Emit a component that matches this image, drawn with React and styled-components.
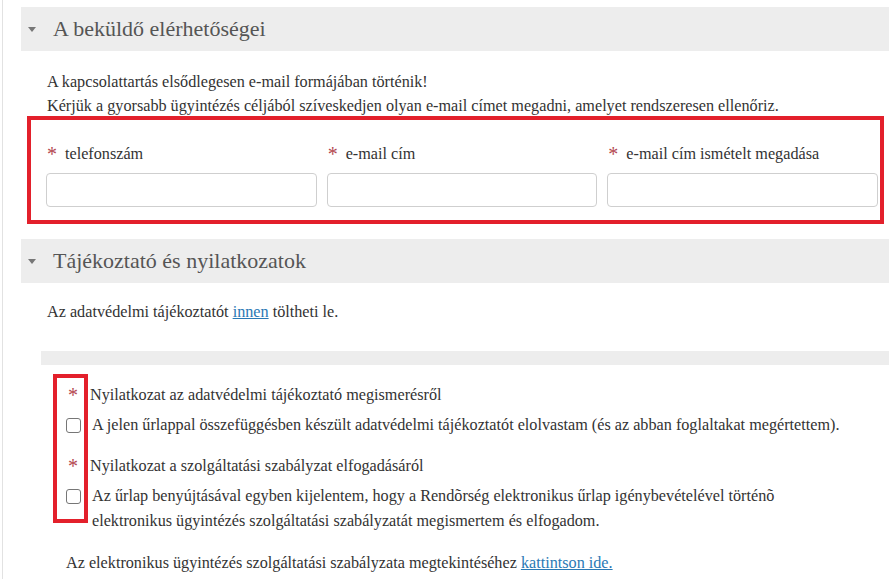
import React from 'react'
import styled, { createGlobalStyle } from 'styled-components'

const GlobalStyle = createGlobalStyle`
  html, body {
    margin: 0;
    padding: 0;
    background: #fff;
    overflow: hidden;
  }
  body, input {
    font-family: 'Liberation Serif', Tinos, 'DejaVu Serif', serif;
    color: #333;
  }
`

const Page = styled.div`
  font-family: 'Liberation Serif', Tinos, 'DejaVu Serif', serif;
  margin-left: 2px;
  border-left: 1px solid #e2e2e2;
  padding-left: 18px;
  min-height: 579px;
  padding-top: 7px;
`

const PanelHeader = styled.div`
  height: 44px;
  background: #ededed;
  display: flex;
  align-items: center;
  padding-left: 7px;
  gap: 17px;
  color: #555;
  font-size: 22px;
`

const Caret = styled.span`
  width: 0;
  height: 0;
  border-left: 4px solid transparent;
  border-right: 4px solid transparent;
  border-top: 5px solid #777;
`

const Intro = styled.div`
  padding: 19px 0 0 26px;
  font-size: 16.2px;
  line-height: 24px;
`

const Para = styled.p`
  margin: 0;
`

const HighlightBox = styled.div`
  margin: -2px 5px 15px 6px;
  border: 4px solid #e3202b;
  padding: 22px 2px 13px 15px;
  display: grid;
  grid-template-columns: repeat(3, 1fr);
  column-gap: 10px;
`

const Field = styled.div`
  display: flex;
  flex-direction: column;
`

const Label = styled.label`
  font-size: 16.2px;
  line-height: 24px;
  padding-left: 1px;
  margin-bottom: 7px;
  display: flex;
  align-items: center;
  gap: 8px;
`

const Star = styled.span`
  color: #b3474f;
  font-size: 20px;
  line-height: 1;
`

const TextInput = styled.input`
  height: 34px;
  box-sizing: border-box;
  border: 1px solid #cfcfcf;
  border-radius: 4px;
  background: #fff;
  width: 100%;
  margin: 0;
`

const InfoText = styled.p`
  margin: 0;
  padding: 17px 0 0 26px;
  font-size: 16.2px;
  line-height: 24px;
`

const Link = styled.a`
  color: #2a79b5;
  text-decoration: underline;
`

const GrayStrip = styled.div`
  margin: 27px 0 0 20px;
  height: 14px;
  background: #ededed;
`

const Declarations = styled.div`
  position: relative;
  padding: 18px 0 0 45px;
  font-size: 16.2px;
`

const DeclLabel = styled.div`
  display: flex;
  align-items: center;
  gap: 12px;
  line-height: 24px;
  margin-top: ${p => (p.$first ? '0' : '16px')};
  padding-left: 2px;
`

const CheckRow = styled.label`
  display: flex;
  align-items: flex-start;
  gap: 11px;
  line-height: 25px;
  margin-top: 6px;
`

const Check = styled.input.attrs({ type: 'checkbox' })`
  appearance: none;
  flex: none;
  width: 15px;
  height: 15px;
  margin: 5px 0 0 0;
  border: 1px solid #767676;
  border-radius: 3px;
  background: #fff;
  box-sizing: border-box;
`

const Footnote = styled.p`
  margin: 17px 0 0 0;
  line-height: 24px;
`

const Marker = styled.div`
  position: absolute;
  left: 32px;
  top: 9px;
  width: 35px;
  height: 149px;
  box-sizing: border-box;
  border: 4px solid #e3202b;
  pointer-events: none;
`

const App = () => {
  return (
    <>
      <GlobalStyle />
      <Page>
        <PanelHeader>
          <Caret />
          <span>A beküldő elérhetőségei</span>
        </PanelHeader>
        <Intro>
          <Para>A kapcsolattartás elsődlegesen e-mail formájában történik!</Para>
          <Para>Kérjük a gyorsabb ügyintézés céljából szíveskedjen olyan e-mail címet megadni, amelyet rendszeresen ellenőriz.</Para>
        </Intro>
        <HighlightBox>
          <Field>
            <Label><Star>*</Star>telefonszám</Label>
            <TextInput type="text" />
          </Field>
          <Field>
            <Label><Star>*</Star>e-mail cím</Label>
            <TextInput type="text" />
          </Field>
          <Field>
            <Label><Star>*</Star>e-mail cím ismételt megadása</Label>
            <TextInput type="text" />
          </Field>
        </HighlightBox>

        <PanelHeader>
          <Caret />
          <span>Tájékoztató és nyilatkozatok</span>
        </PanelHeader>
        <InfoText>
          Az adatvédelmi tájékoztatót <Link href="#">innen</Link> töltheti le.
        </InfoText>
        <GrayStrip />

        <Declarations>
          <DeclLabel $first>
            <Star>*</Star>
            <span>Nyilatkozat az adatvédelmi tájékoztató megismerésről</span>
          </DeclLabel>
          <CheckRow>
            <Check />
            <span>A jelen űrlappal összefüggésben készült adatvédelmi tájékoztatót elolvastam (és az abban foglaltakat megértettem).</span>
          </CheckRow>
          <DeclLabel>
            <Star>*</Star>
            <span>Nyilatkozat a szolgáltatási szabályzat elfogadásáról</span>
          </DeclLabel>
          <CheckRow>
            <Check />
            <span>Az űrlap benyújtásával egyben kijelentem, hogy a Rendõrség elektronikus űrlap igénybevételével történõ<br />elektronikus ügyintézés szolgáltatási szabályzatát megismertem és elfogadom.</span>
          </CheckRow>
          <Footnote>
            Az elektronikus ügyintézés szolgáltatási szabályzata megtekintéséhez <Link href="#">kattintson ide.</Link>
          </Footnote>
          <Marker />
        </Declarations>
      </Page>
    </>
  )
}

export default App
